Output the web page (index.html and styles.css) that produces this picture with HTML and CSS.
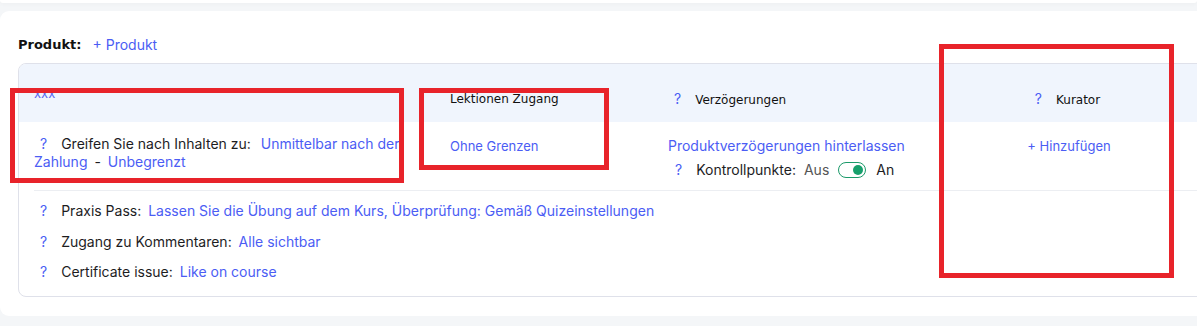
FILE: index.html
```html
<!DOCTYPE html>
<html lang="de">
<head>
    <meta charset="UTF-8">
    <meta name="viewport" content="width=device-width, initial-scale=1.0">
    <title>Produkt</title>
    <link rel="stylesheet" href="styles.css">
</head>
<body>
    <div class="top-card"></div>
    <div class="card">
        <div class="product-line">
            <span class="label">Produkt:</span>
            <span class="link">+ Produkt</span>
        </div>
        <div class="table">
            <div class="row head">
                <div class="cell first"><span class="link xxx">xxx</span></div>
                <div class="cell">Lektionen Zugang</div>
                <div class="cell"><span class="q">?</span>Verzögerungen</div>
                <div class="cell center curator"><span class="q">?</span>Kurator</div>
            </div>
            <div class="row body">
                <div class="cell first">
                    <span class="q">?</span>Greifen Sie nach Inhalten zu: <span class="link gap">Unmittelbar nach der Zahlung</span> <span class="dash">-</span> <span class="link">Unbegrenzt</span>
                </div>
                <div class="cell"><span class="link small">Ohne Grenzen</span></div>
                <div class="cell">
                    <div class="link">Produktverzögerungen hinterlassen</div>
                    <div class="switch-line">
                        <span class="q">?</span>Kontrollpunkte:
                        <span class="off">Aus</span>
                        <span class="toggle"><span class="knob"></span></span>
                        <span>An</span>
                    </div>
                </div>
                <div class="cell center"><span class="link small">+ Hinzufügen</span></div>
            </div>
            <div class="extras">
                <div class="extra"><span class="q">?</span>Praxis Pass: <span class="link value">Lassen Sie die Übung auf dem Kurs, Überprüfung: Gemäß Quizeinstellungen</span></div>
                <div class="extra"><span class="q">?</span>Zugang zu Kommentaren: <span class="link value">Alle sichtbar</span></div>
                <div class="extra"><span class="q">?</span>Certificate issue: <span class="link value">Like on course</span></div>
            </div>
        </div>
    </div>

    <div class="mark mark-access"></div>
    <div class="mark mark-lessons"></div>
    <div class="mark mark-curator"></div>
</body>
</html>
```

FILE: styles.css
```css
body {
    margin: 0;
    background-color: #f4f6f8;
    font-family: Inter, "Noto Sans", sans-serif;
    font-size: 14px;
    color: #1d1d1f;
    overflow: hidden;
    height: 326px;
}
.top-card {
    height: 3px;
    background-color: #fff;
    border-radius: 0 0 8px 8px;
    box-shadow: 0 1px 4px rgba(0, 0, 0, 0.04);
}
.card {
    width: 1240px;
    margin-top: 8px;
    height: 305px;
    box-sizing: border-box;
    padding: 24px 0 0 18px;
    background-color: #fff;
    border-radius: 9px;
}
.product-line {
    display: flex;
    align-items: center;
    height: 18px;
    gap: 11px;
}
.label {
    font-family: "DejaVu Sans", sans-serif;
    font-weight: 600;
    font-size: 13px;
    color: #111;
}
.link {
    color: #4b5df4;
}
.small {
    font-size: 13px;
}
.table {
    margin-top: 10px;
    width: 1220px;
    border: 1px solid #dfe1ea;
    border-radius: 8px;
    overflow: hidden;
}
.row {
    display: grid;
    grid-template-columns: 416px 218px 287px 258px;
}
.cell {
    padding: 0 15px;
    line-height: 18px;
}
.cell.center {
    text-align: center;
}
.head {
    height: 58px;
    background-color: #f0f5fd;
    font-family: "DejaVu Sans", sans-serif;
    font-size: 12px;
    color: #111;
}
.head .cell {
    padding-top: 26px;
}
.head .cell.first {
    padding-top: 20px;
}
.head .cell.curator {
    padding-right: 24px;
}
.head .q {
    font-family: Inter, sans-serif;
    font-size: 14px;
}
.xxx {
    font-family: Inter, sans-serif;
    font-size: 13px;
    color: #5b68f0;
}
.body {
    height: 68px;
}
.body .cell {
    padding-top: 15px;
}
.body .cell.first {
    padding-top: 13px;
}
.q {
    display: inline-block;
    color: #4b5df4;
    margin: 0 14px 0 6px;
}
.gap {
    margin-left: 6px;
}
.dash {
    margin: 0 3px;
}
.value {
    margin-left: 3px;
}
.switch-line {
    display: flex;
    align-items: center;
    margin-top: 6px;
    height: 18px;
}
.switch-line .q {
    margin-left: 7px;
}
.off {
    color: #555;
    margin: 0 9px 0 8px;
}
.toggle {
    display: inline-flex;
    align-items: center;
    justify-content: flex-end;
    box-sizing: border-box;
    width: 28px;
    height: 16px;
    padding: 0 2px;
    border: 1.5px solid #1b9a6a;
    border-radius: 8px;
    margin-right: 10px;
}
.knob {
    width: 10px;
    height: 10px;
    border-radius: 50%;
    background-color: #17a06c;
}
.extras {
    margin-left: 15px;
    border-top: 1px solid #eceef2;
    padding: 11px 0 15px;
    display: flex;
    flex-direction: column;
    gap: 12.5px;
}
.extra {
    line-height: 18px;
}
.mark {
    position: absolute;
    border: 5px solid #e8232a;
    box-sizing: border-box;
}
.mark-access {
    left: 10px;
    top: 88px;
    width: 394px;
    height: 95px;
}
.mark-lessons {
    left: 419px;
    top: 88px;
    width: 190px;
    height: 82px;
}
.mark-curator {
    left: 939px;
    top: 44px;
    width: 235px;
    height: 234px;
}
```
